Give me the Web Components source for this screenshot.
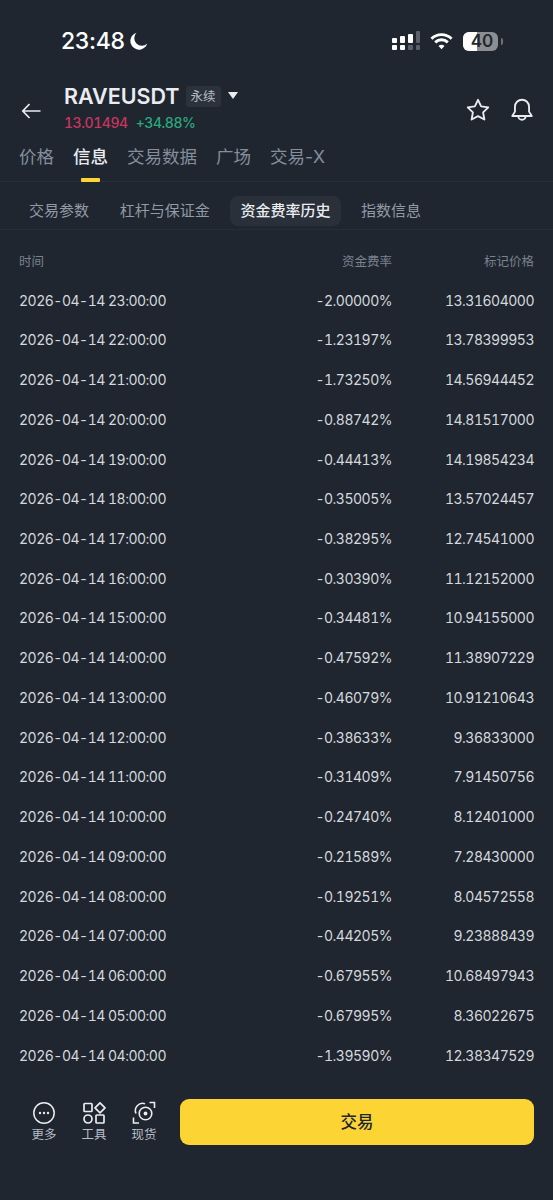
<!DOCTYPE html>
<html lang="zh">
<head>
<meta charset="utf-8">
<title>RAVEUSDT</title>
<style>
  html, body { margin: 0; background: #1f2630; }
  body {
    width: 553px; height: 1200px; overflow: hidden;
    font-family: Inter, "Noto Sans CJK SC", sans-serif;
    color: #eaecef;
  }
</style>
</head>
<body>
<status-bar></status-bar>
<pair-header></pair-header>
<main-tabs></main-tabs>
<sub-tabs></sub-tabs>
<funding-table></funding-table>
<bottom-bar></bottom-bar>

<script>
const CJK = 'Inter, "Noto Sans CJK SC", sans-serif';

class StatusBar extends HTMLElement {
  connectedCallback() {
    this.attachShadow({ mode: 'open' }).innerHTML = `
      <style>
        :host { display: flex; height: 82px; box-sizing: border-box; padding: 26px 50px 0 61px; justify-content: space-between; align-items: flex-start; }
        .left { display: flex; align-items: center; gap: 5px; font: 500 23px/30px ${CJK}; color: #fff; letter-spacing: -.3px; }
        .right { display: flex; align-items: center; gap: 10px; height: 30px; }
        svg { display: block; }
        .batt { position: relative; width: 35px; height: 19px; border-radius: 6px; overflow: hidden; background: #8b8e93; font: 600 17px/19px ${CJK}; color: #24272c; text-align: center; padding-left: 3px; box-sizing: border-box; }
        .batt::before { content: ""; position: absolute; left: 0; top: 0; bottom: 0; width: 14px; background: #fff; }
        .batt span { position: relative; }
        .nub { width: 2px; height: 7px; background: #6f7278; border-radius: 0 2px 2px 0; margin-left: -7px; }
      </style>
      <div class="left">23:48
        <svg width="18" height="18" viewBox="0 0 18 18"><path d="M6.500 .8A8.600 8.600 0 1 0 17.200 11.600 7.400 7.400 0 0 1 6.500 .8Z" fill="#fff"/></svg>
      </div>
      <div class="right">
        <svg width="28" height="20" viewBox="0 0 28 20">
          <g fill="#fff"><rect x="0" y="7" width="5" height="5" rx="1"/><rect x="0" y="14" width="5" height="5" rx="1"/><rect x="8" y="5" width="5" height="7" rx="1"/><rect x="8" y="14" width="5" height="5" rx="1"/><rect x="16" y="3" width="5" height="9" rx="1"/></g>
          <g fill="#5c6068"><rect x="16" y="14" width="5" height="5" rx="1"/><rect x="24" y="0" width="4" height="12" rx="1"/><rect x="24" y="14" width="4" height="5" rx="1"/></g>
        </svg>
        <svg width="23" height="18" viewBox="0 0 24 18" fill="none" stroke="#fff" stroke-width="3">
          <path d="M1.500 6.600a15 15 0 0 1 21 0"/><path d="M5.400 10.400a9.500 9.500 0 0 1 13.200 0"/><path d="M12 17.500 8.900 14.200a4.400 4.400 0 0 1 6.200 0Z" fill="#fff" stroke="none"/>
        </svg>
        <div class="batt"><span>40</span></div>
        <div class="nub"></div>
      </div>`;
  }
}

class PairHeader extends HTMLElement {
  connectedCallback() {
    this.attachShadow({ mode: 'open' }).innerHTML = `
      <style>
        :host { display: flex; align-items: center; height: 54px; padding: 0 18px 0 20px; }
        .back { width: 24px; height: 24px; margin-right: 20px; margin-top: 2px; }
        .info { flex: 1; }
        .top { display: flex; align-items: center; height: 28px; margin-top: -3px; }
        .name { font: 600 21.500px/28px ${CJK}; color: #eaecef; }
        .tag { margin-left: 6px; width: 35px; height: 21px; border-radius: 3px; background: #2b323c; font: 12.500px/21px ${CJK}; color: #b7bdc6; text-align: center; }
        .caret { margin-left: 7px; width: 0; height: 0; border: 5.500px solid transparent; border-top: 7px solid #eaecef; border-bottom: 0; margin-top: -1px; }
        .sub { display: flex; gap: 8px; font: 500 14px/20px ${CJK}; font-variant-numeric: tabular-nums; letter-spacing: -.45px; margin-top: 3px; }
        .px { color: #c9355f; } .ch { color: #2aa97c; }
        .acts { display: flex; gap: 18.500px; margin-top: 2px; }
        svg { display: block; }
      </style>
      <svg class="back" viewBox="0 0 24 24" fill="none" stroke="#eaecef" stroke-width="1.700"><path d="M20.500 13H3M9.500 6 2.800 13l6.700 7"/></svg>
      <div class="info">
        <div class="top"><span class="name">RAVEUSDT</span><span class="tag">永续</span><span class="caret"></span></div>
        <div class="sub"><span class="px">13.01494</span><span class="ch">+34.88%</span></div>
      </div>
      <div class="acts">
        <svg width="26" height="26" viewBox="0 0 24 24" fill="none" stroke="#eaecef" stroke-width="1.700" stroke-linejoin="round"><path d="M12 2.600l2.900 6.100 6.600.9-4.800 4.600 1.200 6.600-5.900-3.200-5.900 3.200 1.200-6.600L2.500 9.600l6.600-.9Z"/></svg>
        <svg width="26" height="26" viewBox="0 0 24 24" fill="none" stroke="#eaecef" stroke-width="1.700" stroke-linejoin="round"><path d="M12 2.500a6.500 6.500 0 0 0-6.500 6.500v4.500L3 17.500h18l-2.500-4V9A6.500 6.500 0 0 0 12 2.500Z"/><path d="M8.500 17.500a3.500 3.500 0 0 0 7 0"/></svg>
      </div>`;
  }
}

class MainTabs extends HTMLElement {
  connectedCallback() {
    const tabs = ['价格', '信息', '交易数据', '广场', '交易-X'];
    this.attachShadow({ mode: 'open' }).innerHTML = `
      <style>
        :host { display: flex; gap: 19px; height: 46px; box-sizing: border-box; padding: 0 19px; border-bottom: 1px solid #282f39; }
        .t { position: relative; font: 17.500px/42px ${CJK}; color: #848e9c; white-space: nowrap; }
        .on { color: #eaecef; font-weight: 500; }
        .on::after { content: ""; position: absolute; left: 8px; right: 8px; bottom: -1px; height: 4px; background: #fcd535; border-radius: 1px; }
      </style>
      ${tabs.map((t, i) => `<div class="t${i === 1 ? ' on' : ''}">${t}</div>`).join('')}`;
  }
}

class SubTabs extends HTMLElement {
  connectedCallback() {
    const tabs = ['交易参数', '杠杆与保证金', '资金费率历史', '指数信息'];
    this.attachShadow({ mode: 'open' }).innerHTML = `
      <style>
        :host { display: flex; gap: 9.700px; height: 48px; box-sizing: border-box; padding: 14px 8px 0 18.500px; border-bottom: 1px solid #272e38; }
        .t { padding: 0 10.500px; height: 30px; font: 15px/30px ${CJK}; color: #929aa5; border-radius: 8px; white-space: nowrap; }
        .t.on { color: #eaecef; background: #29303a; font-weight: 500; }
      </style>
      ${tabs.map((t, i) => `<div class="t${i === 2 ? ' on' : ''}">${t}</div>`).join('')}`;
  }
}

const RATES = [
  ['23:00:00', '-2.00000%', '13.31604000'],
  ['22:00:00', '-1.23197%', '13.78399953'],
  ['21:00:00', '-1.73250%', '14.56944452'],
  ['20:00:00', '-0.88742%', '14.81517000'],
  ['19:00:00', '-0.44413%', '14.19854234'],
  ['18:00:00', '-0.35005%', '13.57024457'],
  ['17:00:00', '-0.38295%', '12.74541000'],
  ['16:00:00', '-0.30390%', '11.12152000'],
  ['15:00:00', '-0.34481%', '10.94155000'],
  ['14:00:00', '-0.47592%', '11.38907229'],
  ['13:00:00', '-0.46079%', '10.91210643'],
  ['12:00:00', '-0.38633%', '9.36833000'],
  ['11:00:00', '-0.31409%', '7.91450756'],
  ['10:00:00', '-0.24740%', '8.12401000'],
  ['09:00:00', '-0.21589%', '7.28430000'],
  ['08:00:00', '-0.19251%', '8.04572558'],
  ['07:00:00', '-0.44205%', '9.23888439'],
  ['06:00:00', '-0.67955%', '10.68497943'],
  ['05:00:00', '-0.67995%', '8.36022675'],
  ['04:00:00', '-1.39590%', '12.38347529'],
];

class FundingTable extends HTMLElement {
  connectedCallback() {
    const cells = RATES.map(r => `<div>2026-04-14 ${r[0]}</div><div class="r">${r[1]}</div><div class="r">${r[2]}</div>`).join('');
    this.attachShadow({ mode: 'open' }).innerHTML = `
      <style>
        :host { display: block; padding: 0 19px; height: 869px; box-sizing: border-box; }
        .g { display: grid; grid-template-columns: 1fr 142px 142px; grid-auto-rows: 39.740px; align-items: center; font: 14px/20px ${CJK}; color: #d5d8dc; padding-top: 11px; font-variant-numeric: tabular-nums; letter-spacing: -.5px; }
        .h { font-size: 12.500px; color: #7a828e; padding-top: 2px; letter-spacing: 0; }
        .g > div { white-space: nowrap; }
        .r { text-align: right; }
      </style>
      <div class="g">
        <div class="h">时间</div><div class="h r">资金费率</div><div class="h r">标记价格</div>
        ${cells}
      </div>`;
  }
}

class BottomBar extends HTMLElement {
  connectedCallback() {
    this.attachShadow({ mode: 'open' }).innerHTML = `
      <style>
        :host { display: flex; align-items: center; height: 46px; padding: 0 19px 0 28px; }
        .items { display: flex; gap: 18px; margin-right: 20px; }
        .it { width: 32px; display: flex; flex-direction: column; align-items: center; font: 12.500px/16px ${CJK}; color: #b7bdc6; }
        svg { display: block; margin-bottom: 2px; }
        .btn { flex: 1; height: 46px; border-radius: 9px; background: #fcd535; color: #202630; font: 500 16.500px/46px ${CJK}; text-align: center; }
      </style>
      <div class="items">
        <div class="it">
          <svg width="24" height="24" viewBox="0 0 24 24" fill="none" stroke="#eaecef" stroke-width="1.500"><circle cx="12" cy="12" r="10.200"/><g fill="#eaecef" stroke="none"><circle cx="8" cy="12" r="1.200"/><circle cx="12" cy="12" r="1.200"/><circle cx="16" cy="12" r="1.200"/></g></svg>
          更多
        </div>
        <div class="it">
          <svg width="24" height="24" viewBox="0 0 24 24" fill="none" stroke="#eaecef" stroke-width="1.700"><rect x="2" y="2.500" width="8" height="8" rx=".8"/><path d="M18 1.800 23 6.800l-5 5-5-5Z" stroke-linejoin="round"/><circle cx="6" cy="18" r="4"/><rect x="14" y="14" width="8" height="8" rx=".8"/></svg>
          工具
        </div>
        <div class="it">
          <svg width="24" height="24" viewBox="0 0 24 24" fill="none" stroke="#eaecef" stroke-width="1.600"><path d="M17.500 1.500h5V7M1.500 16.500v5.500H7"/><path d="M13 2.800A7.200 7.200 0 0 0 4 12.500"/><circle cx="13.500" cy="12.500" r="6.300"/><circle cx="13.500" cy="12.500" r="1.900" fill="#eaecef" stroke="none"/></svg>
          现货
        </div>
      </div>
      <div class="btn">交易</div>`;
  }
}

customElements.define('status-bar', StatusBar);
customElements.define('pair-header', PairHeader);
customElements.define('main-tabs', MainTabs);
customElements.define('sub-tabs', SubTabs);
customElements.define('funding-table', FundingTable);
customElements.define('bottom-bar', BottomBar);
</script>
</body>
</html>
